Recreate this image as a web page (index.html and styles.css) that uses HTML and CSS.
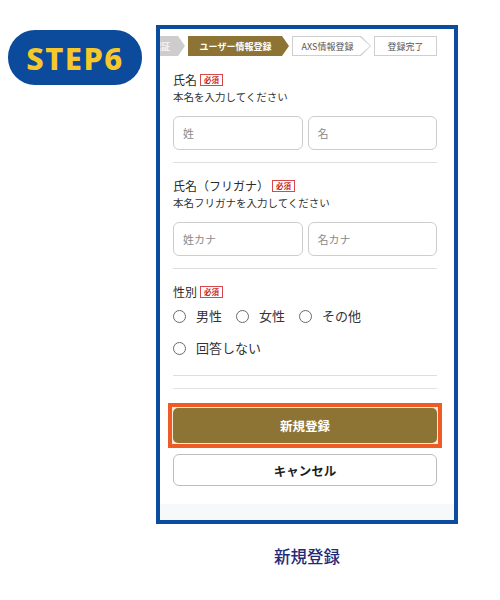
FILE: index.html
```html
<!DOCTYPE html>
<html lang="ja">
<head>
<meta charset="utf-8">
<title>STEP6 新規登録</title>
<link rel="stylesheet" href="styles.css">
</head>
<body>
<main class="page">
  <div class="step-badge">STEP6</div>

  <figure class="shot">
    <div class="phone">
      <nav class="steps">
        <ol class="steps-track">
          <li class="step step-done">SMS認証</li>
          <li class="step step-current">ユーザー情報登録</li>
          <li class="step step-next"><span class="step-inner">AXS情報登録</span></li>
          <li class="step step-last">登録完了</li>
        </ol>
      </nav>

      <form class="form">
        <section class="field">
          <div class="label">氏名<span class="req">必須</span></div>
          <p class="hint">本名を入力してください</p>
          <div class="pair">
            <input class="text-input" type="text" placeholder="姓">
            <input class="text-input" type="text" placeholder="名">
          </div>
        </section>

        <section class="field">
          <div class="label">氏名（フリガナ）<span class="req">必須</span></div>
          <p class="hint">本名フリガナを入力してください</p>
          <div class="pair">
            <input class="text-input" type="text" placeholder="姓カナ">
            <input class="text-input" type="text" placeholder="名カナ">
          </div>
        </section>

        <section class="field field-radio">
          <div class="label">性別<span class="req">必須</span></div>
          <div class="radios">
            <label class="radio"><span class="dot"></span>男性</label>
            <label class="radio"><span class="dot"></span>女性</label>
            <label class="radio"><span class="dot"></span>その他</label>
          </div>
          <div class="radios">
            <label class="radio"><span class="dot"></span>回答しない</label>
          </div>
        </section>

        <div class="spacer"></div>

        <div class="actions">
          <div class="highlight">
            <button type="button" class="btn btn-primary">新規登録</button>
          </div>
          <button type="button" class="btn btn-cancel">キャンセル</button>
        </div>
      </form>

      <div class="foot"></div>
    </div>
    <figcaption class="caption">新規登録</figcaption>
  </figure>
</main>
</body>
</html>
```

FILE: styles.css
```css
* {
  box-sizing: border-box;
}

html, body {
  margin: 0;
  padding: 0;
  background: #ffffff;
}

body {
  font-family: "Noto Sans CJK JP", "Noto Sans", sans-serif;
  color: #333;
}

.page {
  display: flex;
  align-items: flex-start;
  gap: 14px;
  padding: 25px 0 0 8px;
}

/* Pill label on the left */
.step-badge {
  margin-top: 5px;
  width: 134px;
  height: 55px;
  border-radius: 27px;
  background: #0c4a9b;
  color: #f6c82a;
  font-family: "Noto Sans", "Open Sans", sans-serif;
  font-weight: 800;
  font-size: 31px;
  letter-spacing: 1.5px;
  display: flex;
  align-items: center;
  justify-content: center;
}

.shot {
  margin: 0;
  display: flex;
  flex-direction: column;
  align-items: center;
}

/* Device screen */
.phone {
  width: 302px;
  border: 4px solid #0b4c9f;
  background: #fff;
  display: flex;
  flex-direction: column;
}

/* Progress steps (scrolled so the first one is partly hidden) */
.steps {
  margin: 7px 17px 0 0;
  overflow: hidden;
}

.steps-track {
  list-style: none;
  margin: 0 0 0 -40px;
  padding: 0;
  display: flex;
  gap: 3px;
  height: 20px;
}

.step {
  height: 20px;
  display: flex;
  align-items: center;
  justify-content: center;
  font-size: 9px;
  line-height: 1;
  white-space: nowrap;
  flex-shrink: 0;
}

.step-done {
  width: 65px;
  justify-content: flex-end;
  padding-right: 15px;
  background: #cdcdcd;
  color: #f4f4f4;
  font-weight: 700;
  clip-path: polygon(0 0, calc(100% - 7px) 0, 100% 50%, calc(100% - 7px) 100%, 0 100%);
}

.step-current {
  width: 101px;
  padding-right: 6px;
  background: #8d7434;
  color: #fff;
  font-weight: 700;
  clip-path: polygon(0 0, calc(100% - 7px) 0, 100% 50%, calc(100% - 7px) 100%, 0 100%);
}

.step-next {
  width: 79px;
  padding: 1px;
  background: #cfcfcf;
  clip-path: polygon(0 0, calc(100% - 10px) 0, 100% 50%, calc(100% - 10px) 100%, 0 100%);
}

.step-inner {
  width: 100%;
  height: 100%;
  display: flex;
  align-items: center;
  justify-content: center;
  padding-right: 8px;
  background: #fff;
  color: #555;
  clip-path: polygon(0 0, calc(100% - 10px) 0, 100% 50%, calc(100% - 10px) 100%, 0 100%);
}

.step-last {
  flex: 1;
  border: 1px solid #cfcfcf;
  color: #555;
  background: #fff;
}

/* Form */
.form {
  padding: 1px 17px 0 13px;
  display: flex;
  flex-direction: column;
}

.field {
  padding: 15px 0 12px;
  border-bottom: 1px solid #dedede;
}

.label {
  display: flex;
  align-items: center;
  font-size: 12px;
  line-height: 16px;
  color: #2b2b2b;
}

.req {
  margin-left: 3px;
  border: 1px solid #d6484b;
  color: #c9262b;
  font-size: 7.5px;
  font-weight: 700;
  line-height: 10px;
  padding: 0 3px;
}

.hint {
  margin: 2px 0 0;
  font-size: 10.5px;
  line-height: 14px;
  color: #333;
}

.pair {
  margin-top: 12px;
  display: flex;
  gap: 5px;
}

.text-input {
  flex: 1;
  min-width: 0;
  height: 34px;
  border: 1px solid #cdcdcd;
  border-radius: 6px;
  padding: 0 9px;
  font-family: "Noto Sans CJK JP", sans-serif;
  font-size: 11px;
  color: #333;
  background: #fff;
  outline: none;
}

.text-input::placeholder {
  color: #8a8a8a;
}

.field-radio {
  padding-bottom: 11px;
}

.radios {
  display: flex;
  gap: 14px;
  height: 32px;
  align-items: center;
}

.radio {
  display: flex;
  align-items: center;
  gap: 10px;
  font-size: 13px;
  line-height: 16px;
  color: #333;
}

.dot {
  width: 13px;
  height: 13px;
  border: 1.5px solid #6a6a6a;
  border-radius: 50%;
}

.spacer {
  height: 13px;
  border-bottom: 1px solid #e3e3e3;
}

.actions {
  margin-top: 14px;
  display: flex;
  flex-direction: column;
  gap: 6px;
}

/* Orange frame marking the primary button */
.highlight {
  margin: 0 -5px;
  border: 4px solid #ef5b24;
  padding: 1px;
  background: #f4ecd8;
}

.btn {
  width: 100%;
  display: block;
  border-radius: 5px;
  font-family: "Noto Sans CJK JP", sans-serif;
  font-size: 12.5px;
  font-weight: 700;
  cursor: pointer;
}

.btn-primary {
  height: 35px;
  border: none;
  background: #8d7434;
  color: #fff;
}

.btn-cancel {
  height: 32px;
  border: 1px solid #bdbdbd;
  border-radius: 6px;
  background: #fff;
  color: #1e1e1e;
}

.foot {
  margin-top: 18px;
  height: 16px;
  background: #f7f8fa;
}

.caption {
  margin-top: 22px;
  font-size: 16.5px;
  line-height: 20px;
  font-weight: 500;
  color: #1f2b78;
}
```
